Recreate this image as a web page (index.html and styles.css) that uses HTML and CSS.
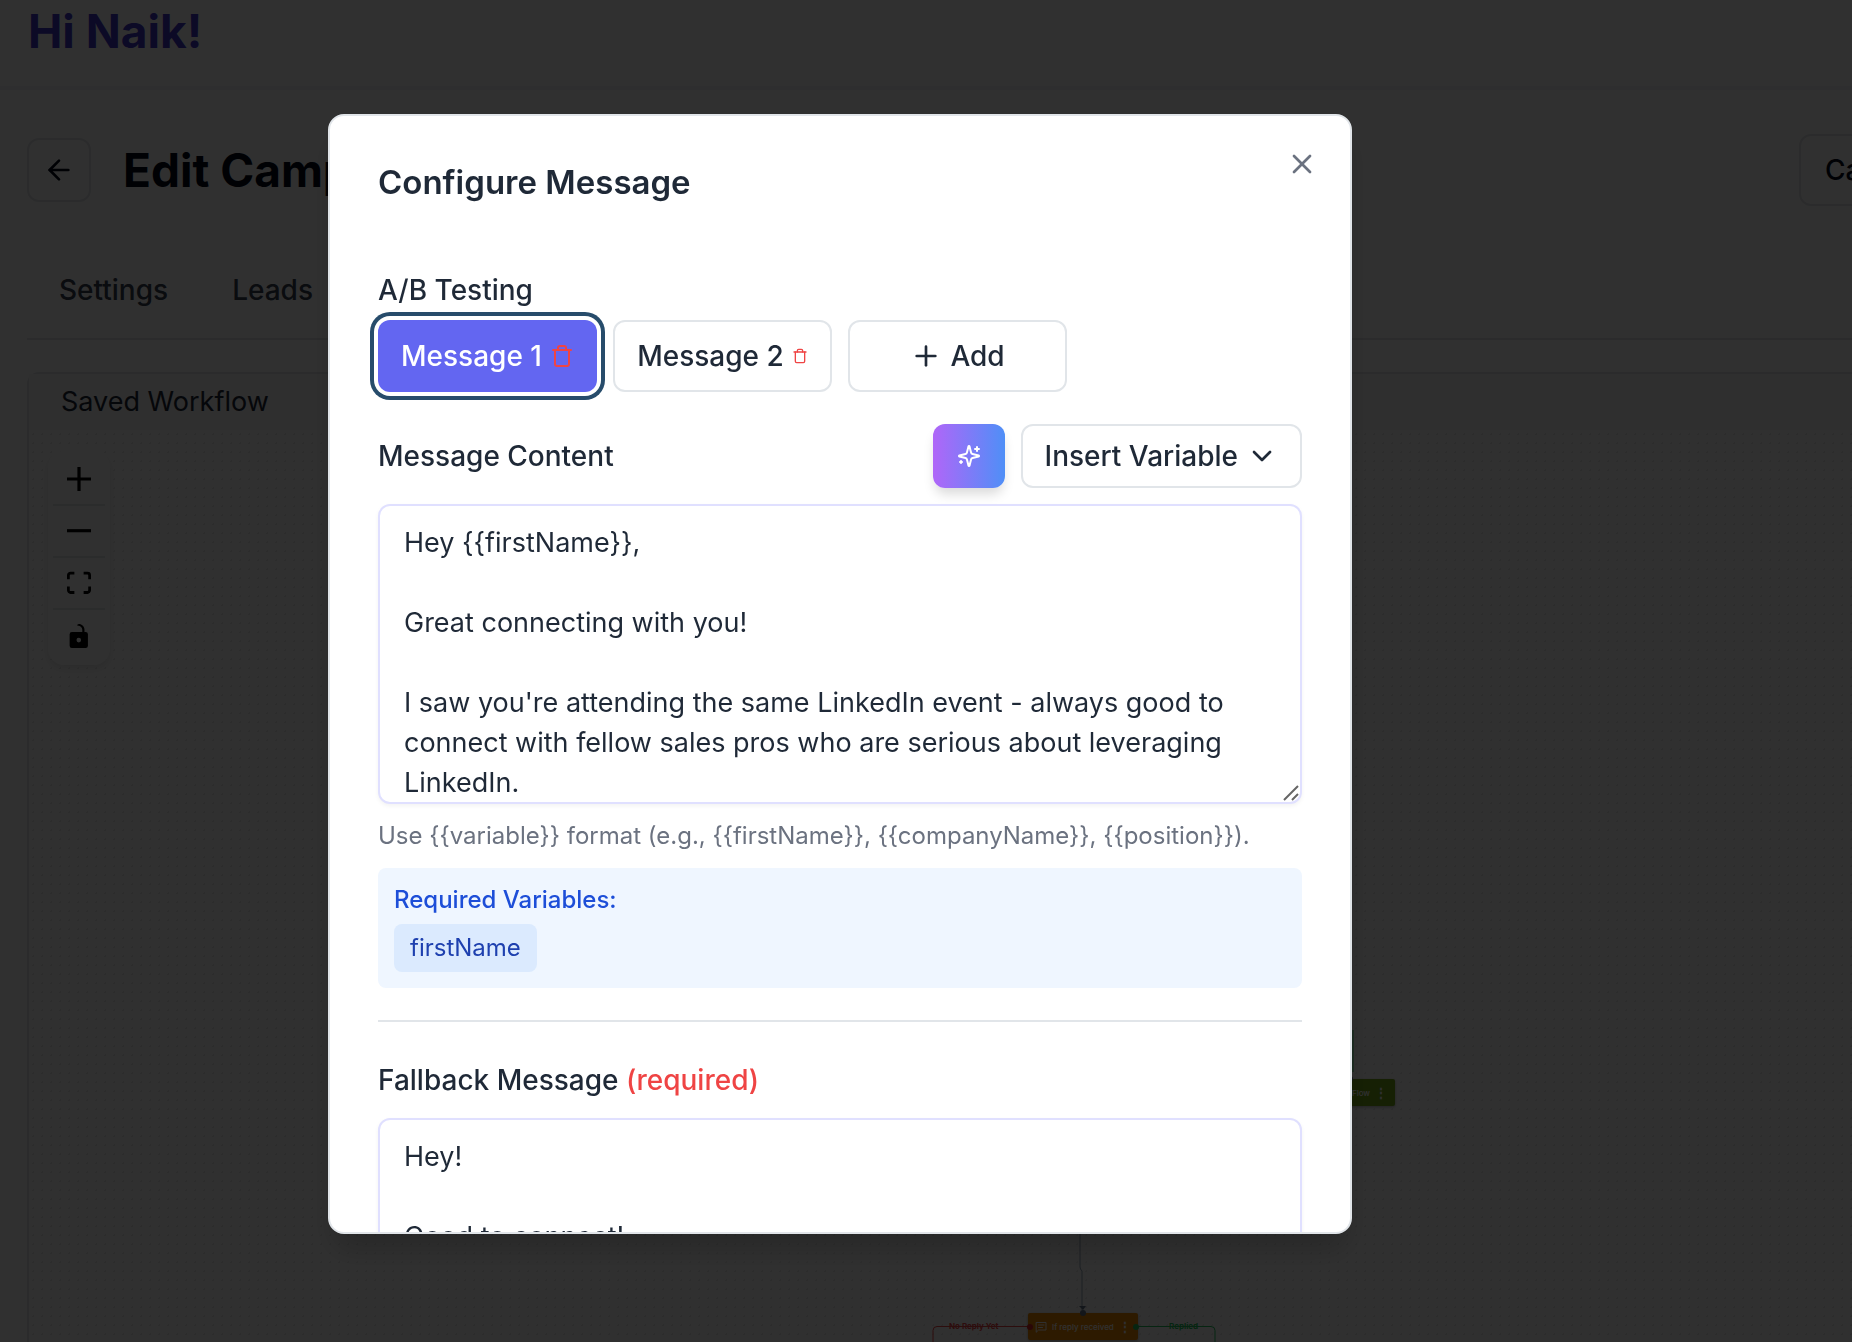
FILE: index.html
```html
<!DOCTYPE html>
<html lang="en">
<head>
    <meta charset="UTF-8">
    <meta name="viewport" content="width=device-width, initial-scale=1.0">
    <title>Edit Campaign</title>
    <link rel="stylesheet" href="styles.css">
</head>
<body>
    <div class="page">
        <header class="topbar">
            <h1 class="greeting">Hi Naik!</h1>
        </header>

        <main class="content">
            <div class="title-row">
                <button type="button" class="back-button" aria-label="Back">
                    <svg width="32" height="32" viewBox="0 0 24 24" class="icon"><path d="m12 19-7-7 7-7"/><path d="M19 12H5"/></svg>
                </button>
                <h2 class="page-title">Edit Campaign</h2>
                <button type="button" class="cancel-button">Cancel</button>
            </div>

            <nav class="tabs">
                <a href="#settings">Settings</a>
                <a href="#leads">Leads</a>
            </nav>

            <section class="workflow">
                <div class="workflow-header">Saved Workflow</div>
                <div class="canvas">
                    <div class="controls">
                        <button type="button" aria-label="Zoom in">
                            <svg width="24" height="24" viewBox="0 0 32 32"><path d="M32 18.133H18.133V32h-4.266V18.133H0v-4.266h13.867V0h4.266v13.867H32z"/></svg>
                        </button>
                        <button type="button" aria-label="Zoom out">
                            <svg width="24" height="4" viewBox="0 0 32 5"><path d="M0 0h32v4.2H0z"/></svg>
                        </button>
                        <button type="button" aria-label="Fit view">
                            <svg width="24" height="24" viewBox="0 0 32 30"><path d="M3.692 4.63c0-.53.4-.938.939-.938h5.215V0H4.708C2.13 0 0 2.054 0 4.63v5.216h3.692V4.631zM27.354 0h-5.2v3.692h5.17c.53 0 .984.4.984.939v5.215H32V4.631A4.624 4.624 0 0 0 27.354 0zm.954 24.83c0 .532-.4.94-.939.94h-5.215v3.768h5.215c2.577 0 4.631-2.13 4.631-4.707v-5.139h-3.692v5.139zm-23.677.94a.919.919 0 0 1-.939-.94v-5.138H0v5.139c0 2.577 2.13 4.707 4.708 4.707h5.138V25.77H4.631z"/></svg>
                        </button>
                        <button type="button" aria-label="Toggle interactivity">
                            <svg width="24" height="24" viewBox="0 0 25 32"><path d="M21.333 10.667H19.81V7.619C19.81 3.429 16.38 0 12.19 0c-4.114 1.828-1.37 2.133.305 2.438 1.676.305 4.42 2.59 4.42 5.181v3.048H3.047A3.056 3.056 0 0 0 0 13.714v15.238A3.056 3.056 0 0 0 3.048 32h18.285a3.056 3.056 0 0 0 3.048-3.048V13.714a3.056 3.056 0 0 0-3.048-3.047zM12.19 24.533a3.056 3.056 0 0 1-3.047-3.047 3.056 3.056 0 0 1 3.047-3.048 3.056 3.056 0 0 1 3.048 3.048 3.056 3.056 0 0 1-3.048 3.047z"/></svg>
                        </button>
                    </div>

                    <!-- edges between the nodes -->
                    <svg class="edges" width="1400" height="912" viewBox="0 0 1400 912">
                        <path d="M1051 780v57q0 2 2 4v39" stroke="#94a3b8"/>
                        <path d="M1050 876h7l-3 4z" fill="#64748b"/>
                        <path d="M1000 896.500H908q-4 0-4 4v20" stroke="#ef4444"/>
                        <path d="M1106 896.500h76q4 0 4 4v20" stroke="#22c55e"/>
                        <path d="M1324 600v42" stroke="#22c55e"/>
                    </svg>
                    <span class="edge-label no-reply">No Reply Yet</span>
                    <span class="edge-label replied">Replied</span>

                    <div class="node reply-node">
                        <svg width="12" height="12" viewBox="0 0 24 24" class="icon"><path d="M3 3h19v15H7l-4 4z"/><path d="M7 8h11M7 13h8"/></svg>
                        <span>If reply received</span>
                        <b class="dots">⋮</b>
                        <i class="handle handle-top"></i>
                        <i class="handle handle-left"></i>
                        <i class="handle handle-right"></i>
                    </div>
                    <div class="node end-node">
                        <span>End Flow</span>
                        <b class="dots">⋮</b>
                        <i class="handle handle-top"></i>
                    </div>
                </div>
            </section>
        </main>
    </div>

    <div class="overlay">
        <div class="modal" role="dialog" aria-labelledby="modalTitle">
            <button type="button" class="close-button" aria-label="Close">
                <svg width="32" height="32" viewBox="0 0 24 24" class="icon"><path d="M18 6 6 18"/><path d="m6 6 12 12"/></svg>
            </button>
            <h2 class="modal-title" id="modalTitle">Configure Message</h2>

            <h3 class="label">A/B Testing</h3>
            <div class="variants">
                <button type="button" class="outline-button selected">
                    Message 1
                    <svg width="24" height="24" viewBox="0 0 24 24" class="icon trash"><path d="M3 6h18"/><path d="M19 6v14c0 1-1 2-2 2H7c-1 0-2-1-2-2V6"/><path d="M8 6V4c0-1 1-2 2-2h4c1 0 2 1 2 2v2"/></svg>
                </button>
                <button type="button" class="outline-button">
                    Message 2
                    <svg width="16" height="16" viewBox="0 0 24 24" class="icon trash"><path d="M3 6h18"/><path d="M19 6v14c0 1-1 2-2 2H7c-1 0-2-1-2-2V6"/><path d="M8 6V4c0-1 1-2 2-2h4c1 0 2 1 2 2v2"/></svg>
                </button>
                <button type="button" class="outline-button">
                    <svg width="32" height="32" viewBox="0 0 24 24" class="icon"><path d="M5 12h14"/><path d="M12 5v14"/></svg>
                    Add
                </button>
            </div>

            <div class="message-row">
                <label class="label" for="message">Message Content</label>
                <button type="button" class="ai-button" aria-label="Write with AI">
                    <svg width="24" height="24" viewBox="0 0 24 24" class="icon"><path d="M9.937 15.500A2 2 0 0 0 8.500 14.063l-6.135-1.582a.5.5 0 0 1 0-.962L8.500 9.936A2 2 0 0 0 9.937 8.500l1.582-6.135a.5.5 0 0 1 .963 0L14.063 8.500A2 2 0 0 0 15.500 9.937l6.135 1.581a.5.5 0 0 1 0 .964L15.500 14.063a2 2 0 0 0-1.437 1.437l-1.582 6.135a.5.5 0 0 1-.963 0z"/><path d="M20 3v4"/><path d="M22 5h-4"/><path d="M4 17v2"/><path d="M5 18H3"/></svg>
                </button>
                <button type="button" class="outline-button insert-button">
                    Insert Variable
                    <svg width="32" height="32" viewBox="0 0 24 24" class="icon"><path d="m6 9 6 6 6-6"/></svg>
                </button>
            </div>

            <div class="textarea-wrap">
                <textarea id="message">Hey {{firstName}},

Great connecting with you!

I saw you're attending the same LinkedIn event - always good to connect with fellow sales pros who are serious about leveraging LinkedIn.</textarea>
                <svg class="grip" width="18" height="18" viewBox="0 0 18 18"><path d="M2 16 16 2M10 16l6-6"/></svg>
            </div>
            <p class="hint">Use {{variable}} format (e.g., {{firstName}}, {{companyName}}, {{position}}).</p>

            <div class="required-box">
                <p>Required Variables:</p>
                <span class="chip">firstName</span>
            </div>

            <hr>

            <label class="label fallback-label" for="fallback">Fallback Message <span class="required">(required)</span></label>
            <div class="textarea-wrap">
                <textarea id="fallback">Hey!

Good to connect!</textarea>
            </div>
        </div>
    </div>
</body>
</html>
```
FILE: styles.css
```css
* {
    box-sizing: border-box;
}
body {
    margin: 0;
    height: 100vh;
    overflow: hidden;
    background-color: #ffffff;
    color: #1f2937;
    font-family: Inter, "Liberation Sans", sans-serif;
    font-size: 27px;
    line-height: 40px;
}
h1, h2, h3, p {
    margin: 0;
}
button {
    padding: 0;
    border: none;
    background: none;
    color: inherit;
    font: inherit;
    font-size: 28px;
    cursor: pointer;
}
.icon {
    fill: none;
    stroke: currentColor;
    stroke-width: 2;
    stroke-linecap: round;
    stroke-linejoin: round;
    flex-shrink: 0;
}

/* page behind the dialog */
.page {
    display: flex;
    flex-direction: column;
    height: 100%;
}
.topbar {
    padding: 0 28px 24px;
    border-bottom: 4px solid #f4f5f7;
}
.greeting {
    color: #4338ca;
    font-size: 46px;
    line-height: 62px;
    font-weight: 700;
}
.content {
    flex: 1;
    display: flex;
    flex-direction: column;
    min-height: 0;
    margin-right: -92px; /* the editor is wider than the window */
    padding: 44px 0 0 27px;
}
.title-row {
    display: flex;
    align-items: center;
    gap: 32px;
}
.back-button {
    display: flex;
    align-items: center;
    justify-content: center;
    width: 64px;
    height: 64px;
    border: 2px solid #e1e5e9;
    border-radius: 12px;
    color: #020617;
}
.page-title {
    flex: 1;
    color: #020617;
    font-size: 46px;
    line-height: 64px;
    font-weight: 700;
}
.cancel-button {
    height: 72px;
    padding: 0 24px;
    border: 2px solid #e1e5e9;
    border-radius: 12px;
    color: #020617;
    font-weight: 500;
}
.tabs {
    display: flex;
    gap: 64px;
    margin-top: 48px;
    padding: 16px 32px 28px;
    border-bottom: 2px solid #e1e5e9;
}
.tabs a {
    color: #374151;
    font-size: 28px;
    font-weight: 500;
    text-decoration: none;
}
.workflow {
    flex: 1;
    display: flex;
    flex-direction: column;
    min-height: 0;
    margin-top: 32px;
    border: 2px solid #e1e5e9;
    border-bottom: none;
    border-radius: 12px 12px 0 0;
}
.workflow-header {
    padding: 8px 32px;
    background-color: #f6f7f9;
}
.canvas {
    position: relative;
    flex: 1;
    background-image: radial-gradient(#ebebeb 1px, transparent 1px);
    background-size: 9px 9px;
}
.controls {
    position: absolute;
    top: 21px;
    left: 19px;
    width: 62px;
    padding: 3px 5px;
    border-radius: 16px;
    background-color: #ffffff;
    box-shadow: 0 4px 8px rgba(0, 0, 0, 0.1);
}
.controls button {
    display: flex;
    align-items: center;
    justify-content: center;
    width: 100%;
    height: 52px;
    border-bottom: 2px solid #e5e7eb;
}
.controls button:last-child {
    border-bottom: none;
}
.edges {
    position: absolute;
    top: 0;
    left: 0;
    fill: none;
}
.node {
    position: absolute;
    display: flex;
    align-items: center;
    gap: 5px;
    height: 27px;
    padding: 0 12px 0 7px;
    border-radius: 2px;
    color: #ffffff;
    font-size: 8px;
    line-height: 12px;
    font-weight: 500;
    white-space: nowrap;
    box-shadow: 0 1px 3px rgba(0, 0, 0, 0.3);
}
.reply-node {
    top: 883px;
    left: 999px;
    width: 110px;
    background-color: #f08c00;
}
.end-node {
    top: 649px;
    left: 1275px;
    width: 91px;
    justify-content: flex-end;
    background-color: #74a81a;
}
.dots {
    width: 8px;
    font-size: 12px;
    text-align: center;
}
.handle {
    position: absolute;
    width: 6px;
    height: 6px;
    border-radius: 50%;
    background-color: #64748b;
}
.handle-top {
    top: -3px;
    left: calc(50% - 3px);
}
.handle-left {
    left: -1px;
    background-color: #dc2626;
}
.handle-right {
    right: -1px;
    background-color: #22c55e;
}
.edge-label {
    position: absolute;
    top: 890px;
    font-size: 8px;
    line-height: 12px;
    font-weight: 700;
}
.no-reply {
    left: 920px;
    color: #ef4444;
}
.replied {
    left: 1140px;
    color: #22c55e;
}

/* dialog */
.overlay {
    position: fixed;
    inset: 0;
    display: flex;
    justify-content: center;
    padding: 114px 172px 108px 0;
    background-color: rgba(0, 0, 0, 0.81);
}
.modal {
    position: relative;
    width: 100%;
    max-width: 1024px;
    padding: 48px;
    overflow: hidden;
    border: 2px solid #e1e5e9;
    border-radius: 16px;
    background-color: #ffffff;
    box-shadow: 0 20px 30px -6px rgba(0, 0, 0, 0.2);
}
.close-button {
    position: absolute;
    top: 32px;
    right: 32px;
    display: flex;
    color: #6b7280;
}
.modal-title {
    margin-bottom: 76px;
    font-size: 33px;
    line-height: 36px;
    font-weight: 600;
}
.label {
    display: block;
    font-size: 28px;
    line-height: 28px;
    font-weight: 500;
}
.variants {
    display: grid;
    grid-template-columns: repeat(4, 1fr);
    gap: 16px;
    margin: 16px 0 32px;
}
.outline-button {
    display: flex;
    align-items: center;
    justify-content: center;
    gap: 8px;
    height: 72px;
    border: 2px solid #e1e5e9;
    border-radius: 12px;
    font-weight: 500;
    white-space: nowrap;
}
.selected {
    border: none;
    background-color: #6366f1;
    color: #ffffff;
    box-shadow: 0 0 0 4px #ffffff, 0 0 0 8px #274c6b;
}
.trash {
    color: #ef4444;
}
.message-row {
    display: flex;
    align-items: center;
    gap: 16px;
    margin-bottom: 16px;
}
.message-row .label {
    flex: 1;
}
.ai-button {
    display: flex;
    align-items: center;
    justify-content: center;
    width: 72px;
    height: 64px;
    border-radius: 12px;
    background-image: linear-gradient(to right, #b066f8, #4f8ff7);
    color: #ffffff;
    box-shadow: 0 8px 12px -2px rgba(0, 0, 0, 0.15);
}
.insert-button {
    height: 64px;
    padding: 0 22px;
}
.textarea-wrap {
    position: relative;
    display: flex;
}
textarea {
    width: 100%;
    height: 300px;
    padding: 17px 24px;
    overflow: hidden;
    border: 2px solid #e0e0ff;
    border-radius: 12px;
    background-color: #ffffff;
    color: inherit;
    font: inherit;
    resize: none;
    outline: none;
    box-shadow: 0 2px 4px rgba(0, 0, 0, 0.05);
}
.grip {
    position: absolute;
    right: 2px;
    bottom: 2px;
    fill: none;
    stroke: #666666;
    stroke-width: 2;
    pointer-events: none;
}
.hint {
    margin: 16px 0;
    color: #6b7280;
    font-size: 24px;
    line-height: 32px;
}
.required-box {
    padding: 16px;
    border-radius: 8px;
    background-color: #eff6ff;
    color: #1d4ed8;
    font-size: 24px;
    line-height: 32px;
    font-weight: 500;
}
.chip {
    display: block;
    width: fit-content;
    margin-top: 8px;
    padding: 8px 16px;
    border-radius: 8px;
    background-color: #dbeafe;
    color: #1e40af;
    font-weight: 400;
}
hr {
    margin: 32px 0 44px;
    border: none;
    border-top: 2px solid #e1e5e9;
}
.fallback-label {
    margin-bottom: 24px;
}
.required {
    color: #ef4444;
}
```
